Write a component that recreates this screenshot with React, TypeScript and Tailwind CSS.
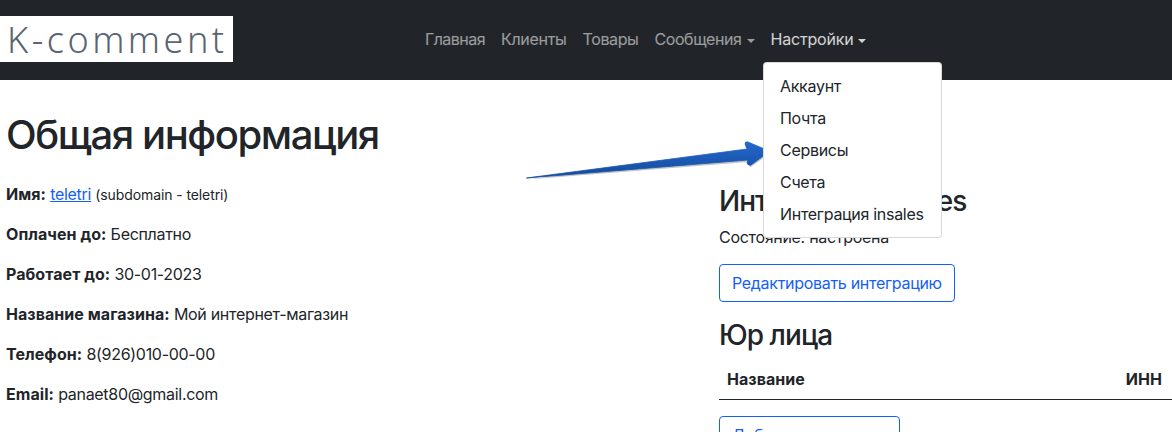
const navLinks = [
  { label: "Главная", className: "text-white/55 tracking-[-0.55px]" },
  { label: "Клиенты", className: "text-white/55 tracking-[-0.3px]" },
  { label: "Товары", className: "text-white/55 tracking-[-0.4px]" },
  { label: "Сообщения", caret: true, className: "text-white/55 tracking-[-0.4px]" },
  { label: "Настройки", caret: true, className: "text-white/80 tracking-[-0.2px]" },
];

const menuItems = ["Аккаунт", "Почта", "Сервисы", "Счета", "Интеграция insales"];

const info = [
  { label: "Оплачен до:", value: "Бесплатно" },
  { label: "Работает до:", value: "30-01-2023" },
  { label: "Название магазина:", value: "Мой интернет-магазин" },
  { label: "Телефон:", value: "8(926)010-00-00" },
  { label: "Email:", value: "panaet80@gmail.com" },
];

function Caret() {
  return <span className="ml-[5px] inline-block h-0 w-0 border-x-[4px] border-t-[4.5px] border-x-transparent border-t-current align-[2px]" />;
}

function Arrow() {
  return (
    <svg className="absolute left-[520px] top-[136px] z-10" width="256" height="48" viewBox="520 136 256 48">
      <defs>
        <linearGradient id="arrowFill" x1="0" y1="0" x2="0" y2="1">
          <stop offset="0" stopColor="#2468cc" />
          <stop offset="1" stopColor="#124a9c" />
        </linearGradient>
      </defs>
      <path d="M527 179.5 L748 162 L750 167.5 L771 153 L746 143 L748 151 Z" fill="#555" opacity="0.35" />
      <path
        d="M526.5 178 L748 160 L747 163 Q748 166 751 165 L768 152.5 Q769 151 768 150.5 L748 142 Q745 141 745 144 L747 149 Z"
        fill="url(#arrowFill)"
        stroke="url(#arrowFill)"
        strokeWidth="0.8"
        strokeLinejoin="round"
      />
    </svg>
  );
}

export default function App() {
  return (
    <div className="relative h-[432px] w-[1172px] overflow-hidden bg-white font-['Inter','Liberation_Sans',sans-serif] text-base leading-6 tracking-[-0.3px] text-[#212529]">
      <header className="relative flex h-20 items-center bg-[#212529]">
        <div className="mb-[2px] flex h-[46px] w-[233px] shrink-0 items-center bg-white pb-px pl-[7px] pt-[2px] font-['Noto_Sans',sans-serif] text-[36px] font-[350] leading-none tracking-[3.5px] text-[#5a6472]">
          K-comment
        </div>
        <nav className="mb-[2px] ml-[192px] flex items-center gap-4">
          {navLinks.map((link) => (
            <a key={link.label} className={link.className}>
              {link.label}
              {link.caret && <Caret />}
            </a>
          ))}
        </nav>
      </header>

      <main className="grid grid-cols-[719px_1fr]">
        <section className="pl-1.5 pt-[31px]">
          <h1 className="mb-[23px] text-[40px] font-medium leading-[48px] tracking-[-1.45px]">Общая информация</h1>
          <p className="mb-4">
            <b className="font-bold tracking-[0.05px]">Имя:</b> <a className="text-[#145ffa] underline">teletri</a>{" "}
            <span className="text-sm tracking-[-0.1px]">(subdomain - teletri)</span>
          </p>
          {info.map((row) => (
            <p key={row.label} className="mb-4">
              <b className="font-bold tracking-[0.05px]">{row.label}</b> {row.value}
            </p>
          ))}
        </section>

        <section className="pt-[104px]">
          <h3 className="mb-[7px] text-[28px] font-medium leading-[34px] tracking-[-0.95px]">Интеграция insales</h3>
          <p className="mb-[15px]">Состояние: настроена</p>
          <button className="h-[38px] rounded border border-[#145ffa] px-3 text-[#145ffa]">Редактировать интеграцию</button>
          <h3 className="mb-[15px] mt-4 text-[28px] font-medium leading-[34px] tracking-[-0.95px]">Юр лица</h3>
          <div className="flex justify-between border-b border-[#212529] px-2 pb-2 font-bold tracking-[0.05px]">
            <span>Название</span>
            <span className="mr-[2px]">ИНН</span>
          </div>
          <button className="mt-4 block h-[38px] w-[181px] rounded border border-[#145ffa] px-3 text-left text-[#145ffa]">Добавить юр. лицо</button>
        </section>
      </main>

      <Arrow />

      <ul className="absolute left-[763px] top-[62px] z-20 w-[179px] rounded border border-black/15 bg-white py-[7px]">
        {menuItems.map((item) => (
          <li key={item} className="whitespace-nowrap px-4 py-1 text-[#212529]">
            {item}
          </li>
        ))}
      </ul>
    </div>
  );
}
